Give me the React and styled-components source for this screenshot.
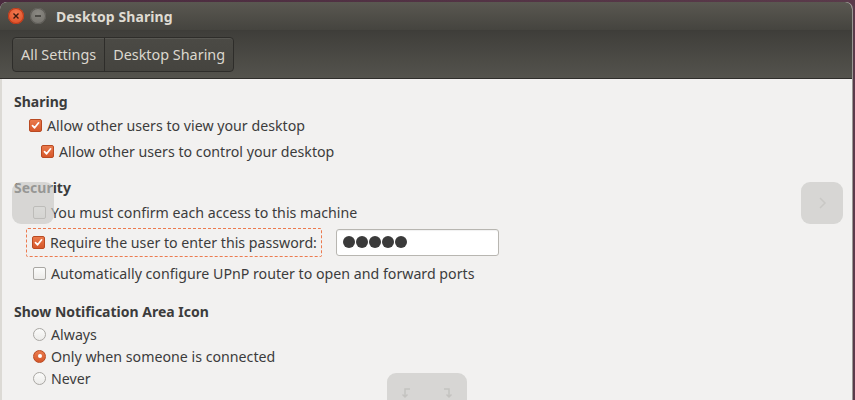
import React from 'react';
import styled, { createGlobalStyle } from 'styled-components';

const GlobalStyle = createGlobalStyle`
  html, body {
    margin: 0;
    padding: 0;
    background: #3a2f3a;
  }
  body {
    font-family: "Noto Sans", "DejaVu Sans", sans-serif;
    width: 855px;
    height: 400px;
    overflow: hidden;
  }
`;

const Backdrop = styled.div`
  width: 855px;
  height: 400px;
  background: linear-gradient(90deg, #4a2a3e 0%, #5a3a4a 100%);
  padding-top: 2px;
  box-sizing: border-box;
  position: relative;
  overflow: hidden;
`;

const Window = styled.div`
  width: 852px;
  height: 398px;
  display: flex;
  flex-direction: column;
  border-radius: 7px 7px 0 0;
  overflow: hidden;
  background: #f2f1f0;
  box-shadow: 1px 0 0 #9a9893;
`;

const TitleBar = styled.div`
  height: 28px;
  display: flex;
  align-items: center;
  padding-left: 8px;
  gap: 6px;
  background: linear-gradient(#5a5851, #45443f);
  border-bottom: 1px solid #3e3d39;
`;

const WinButton = styled.div`
  width: 16px;
  height: 16px;
  border-radius: 50%;
  display: flex;
  align-items: center;
  justify-content: center;
  background: ${(p) =>
    p.$close
      ? 'radial-gradient(circle at 50% 35%, #f37a50, #d9441c)'
      : 'radial-gradient(circle at 50% 35%, #8b8983, #6e6c66)'};
  box-shadow: inset 0 0 0 1px ${(p) => (p.$close ? '#b8391a' : '#5e5c57')};
`;

const Title = styled.div`
  margin-left: 4px;
  color: #dfdbd2;
  font-weight: bold;
  font-size: 14px;
  letter-spacing: 0.1px;
`;

const Toolbar = styled.div`
  height: 47px;
  display: flex;
  align-items: center;
  padding-left: 12px;
  background: linear-gradient(#3f3e3a, #54534d);
  border-bottom: 1px solid #2f2e2b;
`;

const Segmented = styled.div`
  display: flex;
  height: 33px;
  border: 1px solid #2e2d2a;
  border-radius: 4px;
  background: linear-gradient(#4b4a45, #45443f);
  box-shadow: inset 0 1px 0 rgba(255, 255, 255, 0.08);
`;

const Segment = styled.div`
  display: flex;
  align-items: center;
  padding: 0 8px;
  color: #dcd8cf;
  font-size: 14.4px;
  & + & {
    border-left: 1px solid #2e2d2a;
  }
`;

const Content = styled.div`
  flex: 1;
  padding: 11px 0 0 12px;
  display: flex;
  flex-direction: column;
  color: #3c3c3c;
  border-left: 2px solid #dcdad5;
`;

const Heading = styled.div`
  font-weight: bold;
  font-size: 14px;
  height: 22px;
  display: flex;
  align-items: center;
  margin-top: ${(p) => p.$top || 0}px;
  margin-bottom: ${(p) => p.$bottom || 0}px;
`;

const Row = styled.div`
  display: flex;
  align-items: center;
  height: ${(p) => p.$h || 26}px;
  padding-left: ${(p) => p.$indent || 0}px;
  margin-bottom: ${(p) => p.$bottom || 0}px;
  font-size: 14.2px;
`;

const Focus = styled.div`
  display: flex;
  align-items: center;
  height: 27px;
  padding: 0 4px 0 5px;
  border: 1px dashed #ec7a4f;
  border-radius: 2px;
`;

const Box = styled.span`
  width: 11px;
  height: 11px;
  border-radius: 2px;
  margin-right: 5px;
  flex-shrink: 0;
  display: inline-flex;
  align-items: center;
  justify-content: center;
  background: ${(p) => (p.$on ? 'linear-gradient(#ea7b4d, #d6572a)' : 'linear-gradient(#fbfbfa, #ecebe9)')};
  border: 1px solid ${(p) => (p.$on ? '#b94a22' : '#a9a7a3')};
`;

const Radio = styled.span`
  width: 11px;
  height: 11px;
  border-radius: 50%;
  margin-right: 5px;
  flex-shrink: 0;
  display: inline-flex;
  align-items: center;
  justify-content: center;
  background: ${(p) => (p.$on ? 'linear-gradient(#ea7b4d, #d6572a)' : 'linear-gradient(#fbfbfa, #ecebe9)')};
  border: 1px solid ${(p) => (p.$on ? '#b94a22' : '#a9a7a3')};
  &::after {
    content: '';
    display: ${(p) => (p.$on ? 'block' : 'none')};
    width: 4px;
    height: 4px;
    border-radius: 50%;
    background: #fff;
  }
`;

const Entry = styled.div`
  margin-left: 14px;
  width: 155px;
  height: 25px;
  border: 1px solid #b8b6b1;
  border-radius: 3px;
  background: #fff;
  display: flex;
  align-items: center;
  padding-left: 6px;
  gap: 1px;
  box-shadow: inset 0 1px 1px rgba(0, 0, 0, 0.06);
`;

const Dot = styled.span`
  width: 12px;
  height: 12px;
  border-radius: 50%;
  background: #3a3a3a;
`;

const Overlay = styled.div`
  position: absolute;
  left: ${(p) => p.$x}px;
  top: ${(p) => p.$y}px;
  width: ${(p) => p.$w}px;
  height: ${(p) => p.$h}px;
  border-radius: 9px;
  background: rgba(200, 199, 196, 0.65);
  display: flex;
  align-items: center;
  justify-content: center;
  gap: 28px;
`;

const Check = () => (
  <svg width="9" height="9" viewBox="0 0 9 9">
    <path d="M1.5 4.6 L3.6 6.8 L7.6 1.8" fill="none" stroke="#fff" strokeWidth="1.7" strokeLinecap="round" strokeLinejoin="round" />
  </svg>
);

function CheckRow({ on, label, indent }) {
  return (
    <Row $indent={indent}>
      <Box $on={on}>{on && <Check />}</Box>
      {label}
    </Row>
  );
}

export default function App() {
  return (
    <>
      <GlobalStyle />
      <Backdrop>
        <Window>
          <TitleBar>
            <WinButton $close>
              <svg width="8" height="8" viewBox="0 0 8 8">
                <path d="M1.5 1.5 L6.5 6.5 M6.5 1.5 L1.5 6.5" stroke="#3a1a10" strokeWidth="1.4" />
              </svg>
            </WinButton>
            <WinButton>
              <svg width="8" height="8" viewBox="0 0 8 8">
                <path d="M1 4 L7 4" stroke="#3a3935" strokeWidth="1.4" />
              </svg>
            </WinButton>
            <Title>Desktop Sharing</Title>
          </TitleBar>
          <Toolbar>
            <Segmented>
              <Segment>All Settings</Segment>
              <Segment>Desktop Sharing</Segment>
            </Segmented>
          </Toolbar>
          <Content>
            <Heading>Sharing</Heading>
            <CheckRow on indent={15} label="Allow other users to view your desktop" />
            <CheckRow on indent={27} label="Allow other users to control your desktop" />
            <Heading $top={12} $bottom={1}>Security</Heading>
            <CheckRow indent={19} label="You must confirm each access to this machine" />
            <Row $h={34} $indent={12} $bottom={1}>
              <Focus>
                <Box $on>
                  <Check />
                </Box>
                Require the user to enter this password:
              </Focus>
              <Entry>
                <Dot />
                <Dot />
                <Dot />
                <Dot />
                <Dot />
              </Entry>
            </Row>
            <CheckRow indent={19} label="Automatically configure UPnP router to open and forward ports" />
            <Heading $top={14} $bottom={1}>Show Notification Area Icon</Heading>
            <Row $h={22} $indent={19}>
              <Radio />
              Always
            </Row>
            <Row $h={22} $indent={19}>
              <Radio $on />
              Only when someone is connected
            </Row>
            <Row $h={22} $indent={19}>
              <Radio />
              Never
            </Row>
          </Content>
        </Window>
        <Overlay $x={12} $y={182} $w={42} $h={42} />
        <Overlay $x={801} $y={182} $w={42} $h={42}>
          <svg width="10" height="14" viewBox="0 0 10 14">
            <path d="M3 2 L8 7 L3 12" fill="none" stroke="#c9c8c5" strokeWidth="1.5" />
          </svg>
        </Overlay>
        <Overlay $x={387} $y={373} $w={80} $h={40}>
          <svg width="12" height="14" viewBox="0 0 12 14">
            <path d="M9 3 L4 3 L4 11 M1.5 8.5 L4 11 L6.5 8.5" fill="none" stroke="#c4c3c0" strokeWidth="1.5" />
          </svg>
          <svg width="12" height="14" viewBox="0 0 12 14">
            <path d="M3 3 L8 3 L8 11 M5.5 8.5 L8 11 L10.5 8.5" fill="none" stroke="#c4c3c0" strokeWidth="1.5" />
          </svg>
        </Overlay>
      </Backdrop>
    </>
  );
}
